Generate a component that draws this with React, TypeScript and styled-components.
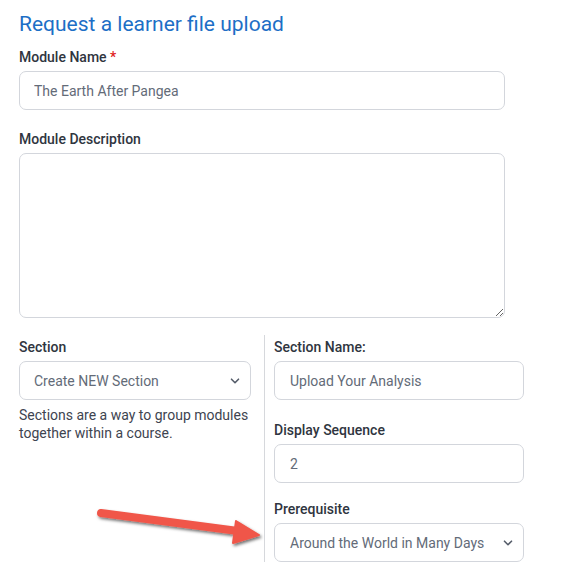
import React from 'react';
import styled, { createGlobalStyle } from 'styled-components';

const GlobalStyle = createGlobalStyle`
  body {
    margin: 0;
    background: #ffffff;
    font-family: Roboto, "Liberation Sans", Arial, sans-serif;
  }
`;

const Chevron: React.FC = () => (
  <ChevronIcon width="10" height="6" viewBox="0 0 10 6">
    <path d="M1.5 1.2l3.5 3.5 3.5-3.5" fill="none" stroke="#555d6a" strokeWidth="1.6" strokeLinecap="round" strokeLinejoin="round" />
  </ChevronIcon>
);

const Arrow: React.FC = () => (
  <ArrowSvg width="190" height="50" viewBox="0 0 190 50">
    <defs>
      <filter id="sh" x="-20%" y="-50%" width="140%" height="200%">
        <feDropShadow dx="1.5" dy="2" stdDeviation="1.6" floodColor="#000" floodOpacity="0.55" />
      </filter>
    </defs>
    <g filter="url(#sh)">
      <line x1="23" y1="14" x2="160" y2="32" stroke="#f0574a" strokeWidth="8" strokeLinecap="round" />
      <path d="M158 22 L181 36 L155 44 Z" fill="#f0574a" stroke="#f0574a" strokeWidth="2" strokeLinejoin="round" />
    </g>
  </ArrowSvg>
);

const App: React.FC = () => {
  return (
    <Page>
      <GlobalStyle />
      <Title>Request a learner file upload</Title>

      <Field>
        <Label>
          Module Name <Required>*</Required>
        </Label>
        <Input $width={486} defaultValue="The Earth After Pangea" />
      </Field>

      <Field>
        <Label>Module Description</Label>
        <TextArea />
      </Field>

      <Columns>
        <LeftCol>
          <Label>Section</Label>
          <SelectBox $width={232}>
            <span>Create NEW Section</span>
            <Chevron />
          </SelectBox>
          <Help>Sections are a way to group modules together within a course.</Help>
        </LeftCol>

        <RightCol>
          <Field $gap={20}>
            <Label>Section Name:</Label>
            <Input $width={250} $pad={15} defaultValue="Upload Your Analysis" />
          </Field>
          <Field $gap={16}>
            <Label>Display Sequence</Label>
            <Input $width={250} $pad={15} defaultValue="2" />
          </Field>
          <Field>
            <Label>Prerequisite</Label>
            <SelectBox $width={250} $pad={15}>
              <span>Around the World in Many Days</span>
              <Chevron />
            </SelectBox>
          </Field>
        </RightCol>
      </Columns>

      <Arrow />
    </Page>
  );
};

export default App;

const Page = styled.div`
  position: relative;
  width: 571px;
  height: 573px;
  padding: 12px 0 0 19px;
  box-sizing: border-box;
  overflow: hidden;
`;

const Title = styled.h1`
  margin: 0 0 10px;
  font-size: 21px;
  line-height: 25px;
  font-weight: 400;
  color: #1d6fc6;
`;

const Field = styled.div<{ $gap?: number }>`
  display: flex;
  flex-direction: column;
  margin-bottom: ${(p) => p.$gap ?? 19}px;

  &:last-child {
    margin-bottom: 0;
  }
`;

const Label = styled.label`
  display: block;
  font-size: 14px;
  line-height: 20px;
  font-weight: 500;
  color: #2f3540;
  margin-bottom: 4px;
`;

const Required = styled.span`
  color: #e02020;
`;

const Input = styled.input<{ $width: number; $pad?: number }>`
  width: ${(p) => p.$width}px;
  height: 39px;
  box-sizing: border-box;
  border: 1px solid #d3d6dc;
  border-radius: 7px;
  padding: 0 ${(p) => p.$pad ?? 14}px;
  font-family: Roboto, "Liberation Sans", Arial, sans-serif;
  font-size: 14px;
  color: #636b78;
  outline: none;
`;

const TextArea = styled.textarea`
  width: 486px;
  height: 165px;
  box-sizing: border-box;
  border: 1px solid #d3d6dc;
  border-radius: 7px;
  padding: 10px 15px;
  font-family: Roboto, "Liberation Sans", Arial, sans-serif;
  font-size: 14px;
  outline: none;
`;

const Columns = styled.div`
  display: grid;
  grid-template-columns: 245px 1fr;
  margin-top: -2px;
`;

const LeftCol = styled.div`
  padding-top: 2px;
`;

const RightCol = styled.div`
  border-left: 1px solid #d6d8dc;
  padding: 2px 0 0 9px;
  height: 227px;
  box-sizing: border-box;
`;

const SelectBox = styled.div<{ $width: number; $pad?: number }>`
  width: ${(p) => p.$width}px;
  height: 39px;
  box-sizing: border-box;
  border: 1px solid #d3d6dc;
  border-radius: 7px;
  padding: 0 10px 0 ${(p) => p.$pad ?? 14}px;
  display: flex;
  align-items: center;
  justify-content: space-between;
  font-size: 14px;
  color: #636b78;
`;

const ChevronIcon = styled.svg`
  flex: none;
`;

const Help = styled.p`
  margin: 6px 0 0;
  font-size: 14px;
  line-height: 18px;
  color: #3e4450;
`;

const ArrowSvg = styled.svg`
  position: absolute;
  left: 78px;
  top: 499px;
`;
